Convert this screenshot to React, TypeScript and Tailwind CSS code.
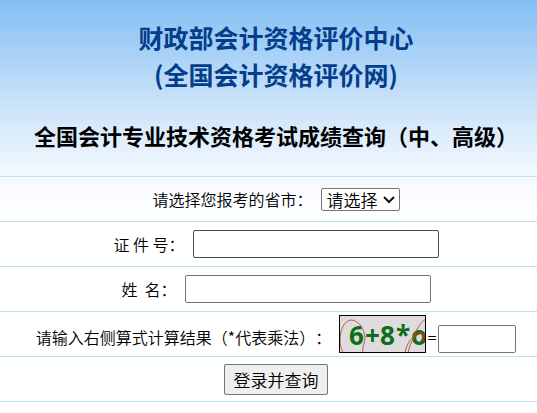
import React from "react";
import clsx from "clsx";

type RowProps = {
  children: React.ReactNode;
  bottom?: boolean;
};

function Row({ children, bottom }: RowProps) {
  return (
    <div
      className={clsx(
        "flex h-[45px] justify-center border-b border-[#bde2f2] pl-[15px] leading-8 whitespace-pre",
        bottom ? "items-end pb-[3px]" : "items-center"
      )}
    >
      {children}
    </div>
  );
}

function Captcha() {
  return (
    <svg
      className="h-[38px] w-[87px] shrink-0"
      viewBox="0 0 87 38"
      role="img"
      aria-label="验证码"
    >
      <rect width="87" height="38" fill="#dfdcdf" />
      <g
        fill="#0f6e18"
        fontFamily="'Open Sans', 'Noto Sans', sans-serif"
        fontWeight="700"
        fontSize="26"
      >
        <text x="10" y="30">6</text>
        <text x="26" y="30">+</text>
        <text x="41" y="30">8</text>
        <text x="57" y="30">*</text>
        <text x="72" y="30">o</text>
      </g>
      <g fill="none" stroke="#b5603f" strokeWidth="1">
        <path d="M1 27C1 14 5 6 12 5C20 5 26 15 26 24C26 28 23 30 24 38" />
        <path d="M1 27C1 31 3 34 4 38" />
        <path d="M66 38C67 31 70 26 74 22C78 15 80 8 87 4" />
        <path d="M69 38C70 32 72 27 76 22C80 17 84 18 87 21" />
        <path d="M75 23C78 17 84 17 86 21L82 27" stroke="#8f4a12" strokeWidth="2" />
      </g>
      <rect x="0.5" y="0.5" width="86" height="37" fill="none" stroke="#000" />
    </svg>
  );
}

function App() {
  return (
    <main className="bg-white bg-[linear-gradient(180deg,#84bff4_0px,#c8e1f9_100px,#f4f9ff_176px,#ffffff_215px)] font-['Noto_Sans_CJK_SC',sans-serif] text-base font-[350] text-black [text-spacing-trim:space-all]">
      <header className="h-[177px] border-b border-[#bde2f2] pt-[19px] pl-[15px] text-center font-bold whitespace-nowrap">
        <h1 className="text-[25px] leading-[37px] text-[#043e8b]">
          财政部会计资格评价中心
          <br />
          (全国会计资格评价网)
        </h1>
        <h2 className="mt-6 flex justify-center text-[22px] leading-[37px]">
          全国会计专业技术资格考试成绩查询（中、高级）
        </h2>
      </header>
      <form onSubmit={(e) => e.preventDefault()}>
        <Row>
          <label htmlFor="province">请选择您报考的省市：</label>
          <div className="relative ml-2">
            <select
              id="province"
              className="block h-[23px] w-[79px] appearance-none rounded-xs border border-[#767676] bg-white pl-[5px] text-[17px] leading-[21px]"
            >
              <option>请选择</option>
            </select>
            <svg
              className="pointer-events-none absolute top-2 right-[5px] h-2 w-3"
              viewBox="0 0 12 8"
              fill="none"
              stroke="#111"
              strokeWidth="2"
            >
              <path d="M1 1L6 6L11 1" />
            </svg>
          </div>
        </Row>
        <Row>
          <label htmlFor="idNumber">证 件 号：</label>
          <input
            id="idNumber"
            type="text"
            className="ml-2 h-7 w-[246px] rounded-xs border border-[#4b4b4b] bg-white px-1"
          />
        </Row>
        <Row>
          <label htmlFor="fullName">姓&nbsp;&nbsp;名：</label>
          <input
            id="fullName"
            type="text"
            className="ml-2 h-7 w-[246px] rounded-xs border border-[#767676] bg-white px-1"
          />
        </Row>
        <Row bottom>
          <label htmlFor="answer">请输入右侧算式计算结果（*代表乘法）：</label>
          <span className="ml-2 flex items-end">
            <Captcha />
            <span className="w-3 text-center">=</span>
            <input
              id="answer"
              type="text"
              className="h-7 w-[78px] rounded-xs border border-[#767676] bg-white px-1"
            />
          </span>
        </Row>
        <Row>
          <button
            type="submit"
            className="h-[31px] w-[104px] rounded-xs border border-[#767676] bg-[#efefef] text-[17px] leading-[29px]"
          >
            登录并查询
          </button>
        </Row>
      </form>
    </main>
  );
}

export default App;
